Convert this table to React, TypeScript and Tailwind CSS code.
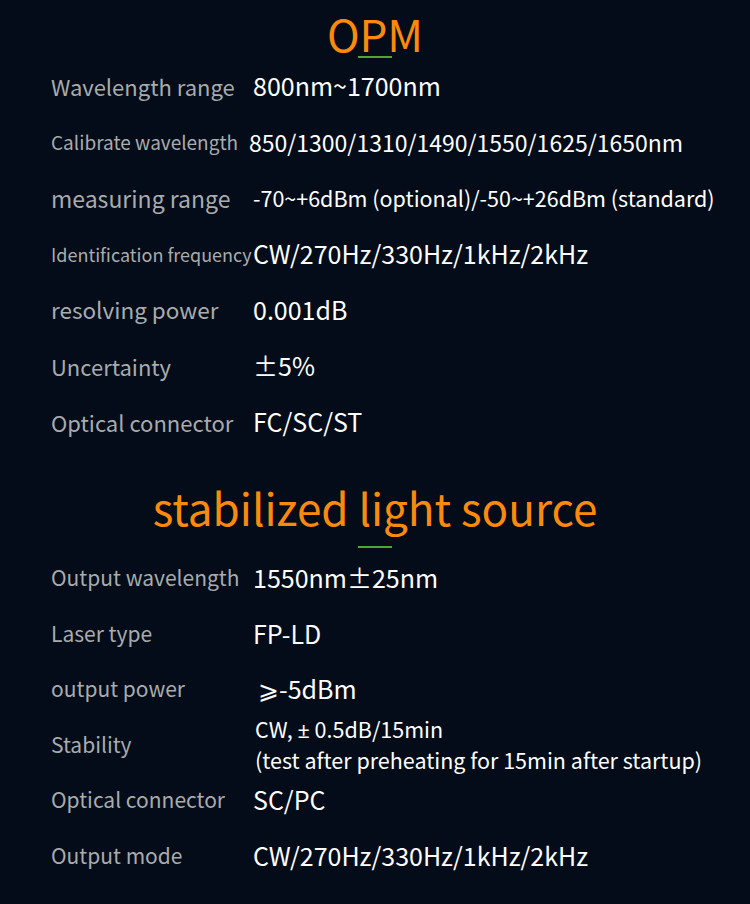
import React from "react";

type Row = {
  label: string;
  value: React.ReactNode;
  labelSize?: string;
  valueSize?: string;
  valuePad?: string;
};

const opmRows: Row[] = [
  { label: "Wavelength range", value: "800nm~1700nm", labelSize: "text-[22px]" },
  { label: "Calibrate wavelength", value: "850/1300/1310/1490/1550/1625/1650nm", labelSize: "text-[19px]", valueSize: "text-[23px]", valuePad: "-ml-[4px]" },
  { label: "measuring range", value: "-70~+6dBm (optional)/-50~+26dBm (standard)", labelSize: "text-[23px]", valueSize: "text-[21.5px]" },
  { label: "Identification frequency", value: "CW/270Hz/330Hz/1kHz/2kHz", labelSize: "text-[18px]" },
  { label: "resolving power", value: "0.001dB", labelSize: "text-[22.5px]" },
  { label: "Uncertainty", value: "±5%", labelSize: "text-[22px]" },
  { label: "Optical connector", value: "FC/SC/ST", labelSize: "text-[22px]" },
];

const sourceRows: Row[] = [
  { label: "Output wavelength", value: "1550nm±25nm" },
  { label: "Laser type", value: "FP-LD" },
  { label: "output power", value: "⩾-5dBm", valuePad: "pl-[5px]" },
  {
    label: "Stability",
    value: (
      <div className="text-[21.5px] leading-[30px]">
        <div>
          CW, <span className="font-['Noto_Sans']">±</span> 0.5dB/15min
        </div>
        <div>(test after preheating for 15min after startup)</div>
      </div>
    ),
    valuePad: "pl-[2px]",
  },
  { label: "Optical connector", value: "SC/PC" },
  { label: "Output mode", value: "CW/270Hz/330Hz/1kHz/2kHz" },
];

const SpecRow = ({ row, height }: { row: Row; height: string }) => (
  <div className={`flex items-center ${height}`}>
    <div className={`w-[202px] shrink-0 whitespace-nowrap text-[#a9abad] ${row.labelSize ?? "text-[21px]"}`}>
      {row.label}
    </div>
    <div className={`whitespace-nowrap text-white ${row.valueSize ?? "text-[25px]"} ${row.valuePad ?? ""}`}>
      {row.value}
    </div>
  </div>
);

const Heading = ({ title, lineGap }: { title: string; lineGap: string }) => (
  <div className="flex flex-col items-center">
    <h2 className="text-[44px] leading-normal text-[#fb8a0c]">{title}</h2>
    <div className={`h-[2px] w-[34px] bg-[#4fa52d] ${lineGap}`} />
  </div>
);

export default function App() {
  return (
    <div
      className="h-[904px] w-[750px] overflow-hidden bg-[#030c18]"
      style={{ fontFamily: '"Noto Sans CJK SC", "Noto Sans", sans-serif' }}
    >
      <Heading title="OPM" lineGap="-mt-[10px]" />
      <div className="pl-[51px]">
        {opmRows.map((r) => (
          <SpecRow key={r.label} row={r} height="h-[56px]" />
        ))}
      </div>
      <div className="mt-[24px]">
        <Heading title="stabilized light source" lineGap="mt-[6px]" />
      </div>
      <div className="mt-[2px] pl-[51px]">
        {sourceRows.map((r) => (
          <SpecRow key={r.label} row={r} height="h-[55.5px]" />
        ))}
      </div>
    </div>
  );
}
